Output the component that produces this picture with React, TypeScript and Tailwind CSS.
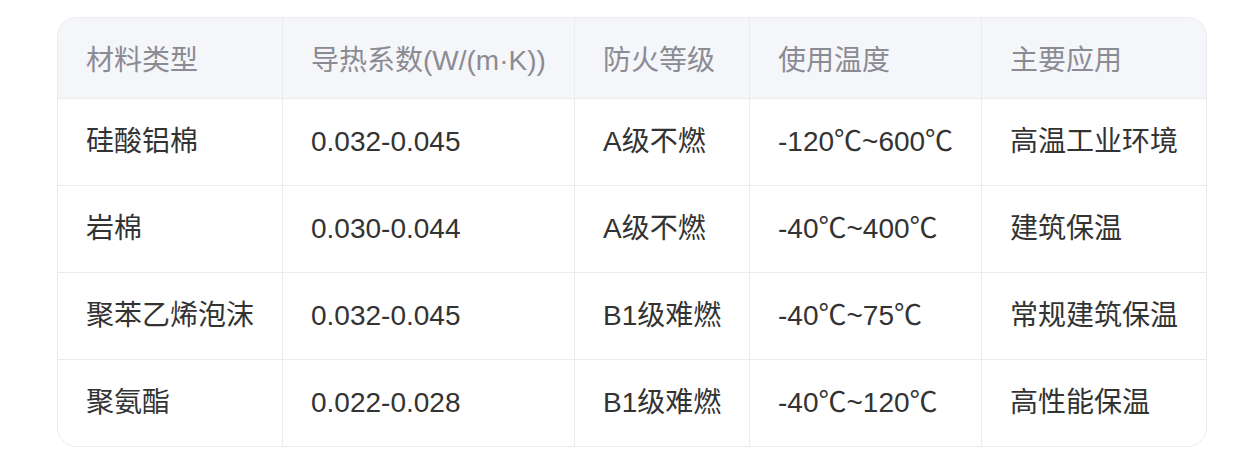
import React from 'react';

const headers = ['材料类型', '导热系数(W/(m·K))', '防火等级', '使用温度', '主要应用'];

const rows = [
  ['硅酸铝棉', '0.032-0.045', 'A级不燃', '-120℃~600℃', '高温工业环境'],
  ['岩棉', '0.030-0.044', 'A级不燃', '-40℃~400℃', '建筑保温'],
  ['聚苯乙烯泡沫', '0.032-0.045', 'B1级难燃', '-40℃~75℃', '常规建筑保温'],
  ['聚氨酯', '0.022-0.028', 'B1级难燃', '-40℃~120℃', '高性能保温'],
];

const colWidths = ['w-[225px]', 'w-[292px]', 'w-[175px]', 'w-[232px]', 'w-[224px]'];

const App: React.FC = () => {
  return (
    <div className="min-h-screen bg-white pt-[17px] pl-[57px] font-['Liberation_Sans','Noto_Sans_CJK_SC',sans-serif]">
      <div className="w-[1150px] overflow-hidden rounded-[19px] border border-[#ebebee]">
        <table className="w-full table-fixed border-separate border-spacing-0 text-[28px]">
          <colgroup>
            {colWidths.map((w, i) => (
              <col key={i} className={w} />
            ))}
          </colgroup>
          <thead>
            <tr className="bg-[#f5f6f9]">
              {headers.map((h, i) => (
                <th
                  key={h}
                  className={`h-[81px] border-b border-[#ebebee] pl-7 pt-[6px] text-left align-middle font-normal text-[#8b8b94] whitespace-nowrap ${
                    i < headers.length - 1 ? 'border-r' : ''
                  }`}
                >
                  {h}
                </th>
              ))}
            </tr>
          </thead>
          <tbody>
            {rows.map((row, r) => (
              <tr key={r}>
                {row.map((cell, i) => (
                  <td
                    key={i}
                    className={`pl-7 align-middle text-[#333333] whitespace-nowrap border-[#ebebee] ${
                      r < rows.length - 1 ? 'h-[87px] border-b' : 'h-[86px]'
                    } ${i < row.length - 1 ? 'border-r' : ''}`}
                  >
                    {cell}
                  </td>
                ))}
              </tr>
            ))}
          </tbody>
        </table>
      </div>
    </div>
  );
};

export default App;
